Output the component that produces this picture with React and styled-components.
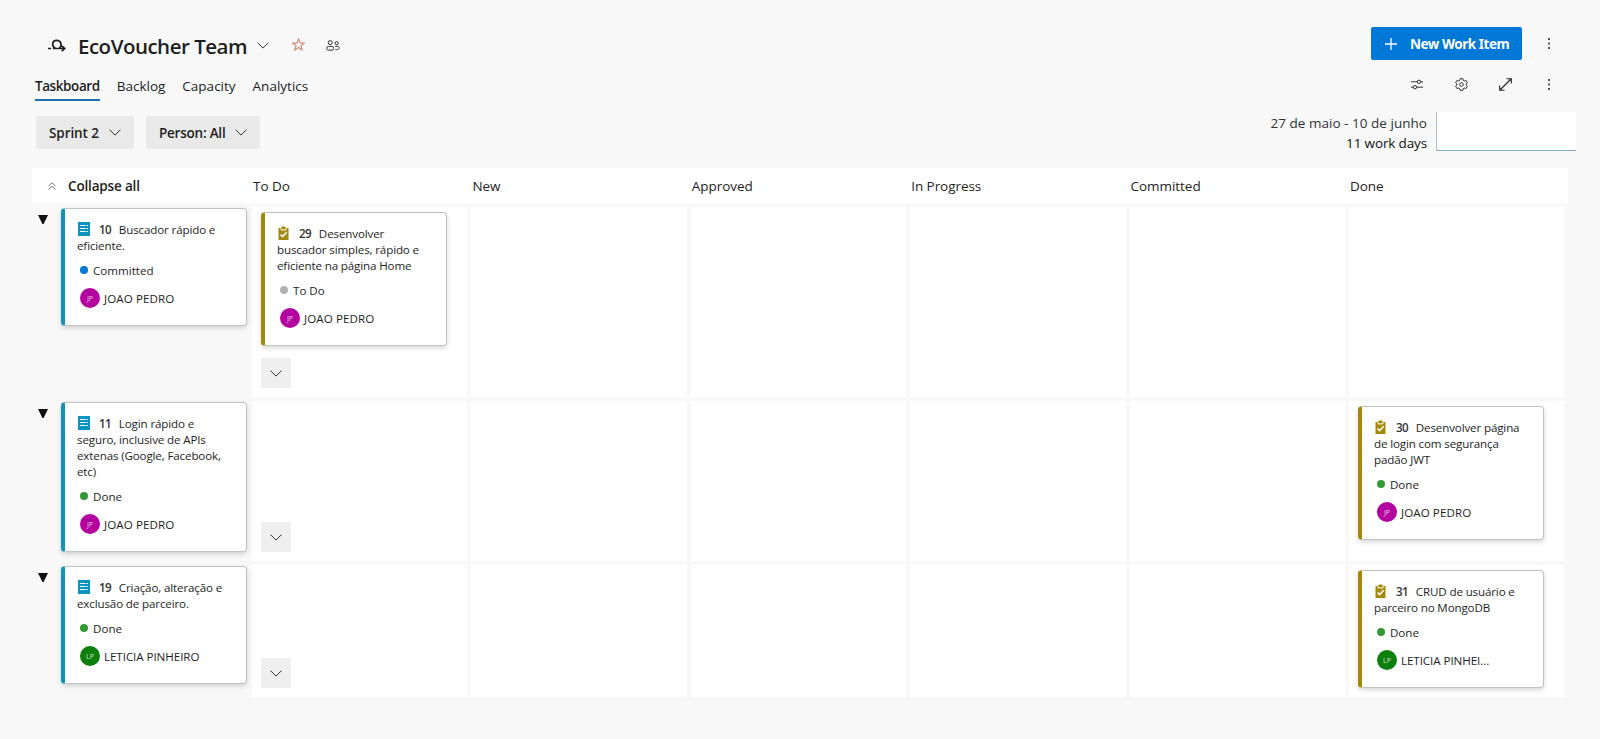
import React from 'react';
import styled, { createGlobalStyle } from 'styled-components';

const GlobalStyle = createGlobalStyle`
  *, *::before, *::after { box-sizing: border-box; }
  body {
    margin: 0;
    background: #f8f8f8;
    color: #1e1e1e;
    font-family: "Open Sans", "Noto Sans", sans-serif;
    font-size: 13.5px;
  }
  button { font: inherit; color: inherit; border: 0; padding: 0; background: none; }
`;

const Page = styled.div`
  height: 739px;
  padding: 27px 24px 0 32px;
  overflow: hidden;
`;

const TitleBar = styled.header`
  display: flex;
  align-items: center;
  height: 33px;
  padding: 0 0 0 16px;
`;

const Title = styled.h1`
  margin: 4px 10px 0 12px;
  font-size: 20.5px;
  font-weight: 550;
  line-height: 28px;
  letter-spacing: -0.5px;
  white-space: nowrap;
`;

const TitleIcon = styled.span`
  display: flex;
  margin: ${(p) => p.$top || 0}px ${(p) => p.$right || 0}px 0 0;
`;

const PrimaryButton = styled.button`
  display: flex;
  align-items: center;
  gap: 13px;
  width: 151px;
  height: 33px;
  margin-left: auto;
  padding: 0 0 0 14px;
  border-radius: 2px;
  background: #0078d7;
  color: #fff;
  font-family: "Noto Sans", sans-serif;
  font-weight: 700;
  letter-spacing: -0.46px;
  white-space: nowrap;
`;

const IconButton = styled.button`
  display: flex;
  align-items: center;
  justify-content: center;
  width: ${(p) => p.$width || 16}px;
  height: 16px;
`;

const NavBar = styled.nav`
  display: flex;
  align-items: flex-start;
  height: 52px;
  padding: 14px 20px 0 3px;
`;

const Tab = styled.a`
  height: 27px;
  margin-right: 17px;
  line-height: 25px;
  white-space: nowrap;
  font-weight: ${(p) => (p.$active ? 600 : 400)};
  letter-spacing: ${(p) => (p.$active ? '-0.42px' : '0')};
  border-bottom: 2px solid ${(p) => (p.$active ? '#1c6fb0' : 'transparent')};
`;

const ViewActions = styled.div`
  display: flex;
  gap: 28px;
  margin: 2px -1px 0 auto;
`;

const FilterBar = styled.div`
  display: flex;
  align-items: flex-start;
  height: 56px;
  padding-left: 4px;
`;

const FilterButton = styled.button`
  display: flex;
  align-items: center;
  gap: 10px;
  height: 33px;
  margin: 4px 12px 0 0;
  padding: 0 13px 0 13px;
  border-radius: 2px;
  background: #e9e9e9;
  font-weight: 600;
  letter-spacing: ${(p) => p.$spacing}px;
  white-space: nowrap;
`;

const SprintDates = styled.div`
  margin-left: auto;
  padding-top: 1px;
  color: #333;
  line-height: 20px;
  letter-spacing: 0.03px;
  text-align: right;
  white-space: nowrap;
`;

const WorkDays = styled.div`
  color: #111;
  letter-spacing: -0.14px;
`;

const Burndown = styled.div`
  width: 140px;
  height: 39px;
  margin-left: 9px;
  background: #fff;
  border-left: 1px solid #b4bcc6;
  border-bottom: 1px solid #86a9c9;
`;

const BoardHeader = styled.div`
  display: grid;
  grid-template-columns: 220px repeat(6, 219.4px);
  align-items: center;
  width: 1536px;
  height: 35px;
  padding-left: 1px;
  background: #fff;
  overflow: hidden;
`;

const CollapseAll = styled.button`
  display: flex;
  align-items: center;
  gap: 12px;
  padding: 1px 0 0 15px;
  font-weight: 600;
  letter-spacing: -0.17px;
`;

const ColumnName = styled.div`
  padding-top: 1px;
  letter-spacing: -0.05px;
`;

const Board = styled.div`
  display: flex;
  flex-direction: column;
  gap: 4px;
  padding-top: 4px;
`;

const BoardRow = styled.section`
  display: grid;
  grid-template-columns: 216px repeat(6, 215.4px);
  column-gap: 4px;
  height: ${(p) => p.$height}px;
`;

const RowHead = styled.div`
  display: flex;
  align-items: flex-start;
  padding: 1px 0 0 6px;
`;

const Toggle = styled.button`
  display: flex;
  width: 23px;
  padding-top: 7px;
`;

const Cell = styled.div`
  display: flex;
  flex-direction: column;
  justify-content: space-between;
  min-width: 0;
  padding: 5px 0 9px 9px;
  background: #fff;
`;

const ExpandButton = styled.button`
  display: flex;
  align-items: center;
  justify-content: center;
  width: 30px;
  height: 30px;
  margin-top: auto;
  background: #efeff0;
`;

const CardBox = styled.article`
  width: 186px;
  padding: 13px 12px 17px;
  border: 1px solid #c2c2c2;
  border-left: 4px solid ${(p) => p.$accent};
  border-radius: 4px;
  background: #fff;
  box-shadow: 0 2px 5px rgba(0, 0, 0, 0.16);
  font-size: 11.6px;
`;

const CardTitle = styled.div`
  line-height: 16px;
  letter-spacing: -0.14px;
  white-space: nowrap;
`;

const TitleLine = styled.div`
  display: flex;
  height: 16px;
`;

const TypeIcon = styled.span`
  display: flex;
  width: 22px;
  padding-left: 1px;
`;

const ItemId = styled.span`
  margin-right: 8px;
  font-weight: 550;
  letter-spacing: -0.7px;
  color: #333;
`;

const State = styled.div`
  display: flex;
  align-items: center;
  gap: 5px;
  height: 16px;
  margin: 8px 0 0 3px;
`;

const Dot = styled.span`
  width: 8px;
  height: 8px;
  border-radius: 50%;
  background: ${(p) => p.$color};
`;

const Assignee = styled.div`
  display: flex;
  align-items: center;
  gap: 4px;
  height: 20px;
  margin: 10px 0 0 3px;
`;

const Avatar = styled.span`
  display: flex;
  align-items: center;
  justify-content: center;
  width: 20px;
  height: 20px;
  border-radius: 50%;
  background: ${(p) => p.$color};
  color: rgba(255, 255, 255, 0.8);
  font-size: 7px;
`;

const PersonName = styled.span`
  letter-spacing: ${(p) => p.$spacing}px;
  white-space: nowrap;
`;

const Chevron = () => (
  <svg width="12" height="7" viewBox="0 0 12 7" fill="none" stroke="#333" strokeWidth="1">
    <path d="M.5.6 6 6.1 11.5.6" />
  </svg>
);

const SprintIcon = () => (
  <svg width="18" height="13" viewBox="0 0 18 13" fill="none" stroke="#1e1e1e" strokeWidth="1.7">
    <path d="M0 9.5H3.2M5 9.5H16.5M7.4 9.3C3.2 7.4 4 1.3 8.7 1.3S14.2 6.6 11.4 9.3M13.8 6.9 16.7 9.5 13.8 12.1" />
  </svg>
);

const StarIcon = () => (
  <svg width="13" height="13" viewBox="0 0 13 13" fill="none" stroke="#d28670" strokeWidth="1.1">
    <path d="M6.5.9 8 4.9 12.3 5.1 8.9 7.7 10.1 12 6.5 9.5 2.9 12 4.1 7.7.7 5.1 5 4.9Z" />
  </svg>
);

const PeopleIcon = () => (
  <svg width="14" height="11" viewBox="0 0 14 11" fill="none" stroke="#333" strokeWidth="1">
    <circle cx="4.2" cy="2.6" r="2" />
    <circle cx="10.7" cy="3.2" r="1.6" />
    <rect x=".8" y="6.4" width="6.8" height="3.8" rx="1.7" />
    <path d="M9.2 6.4h2.4c1 0 1.5.5 1.5 1.3 0 1.3-1 2-2.4 2-.6 0-1-.1-1.4-.3" />
  </svg>
);

const PlusIcon = () => (
  <svg width="12" height="12" viewBox="0 0 12 12" stroke="#fff" strokeWidth="1.3">
    <path d="M6 0V12M0 6H12" />
  </svg>
);

const MoreIcon = () => (
  <svg width="2" height="11" viewBox="0 0 2 11" fill="#555">
    <rect width="2" height="2" />
    <rect y="4.5" width="2" height="2" />
    <rect y="9" width="2" height="2" />
  </svg>
);

const SlidersIcon = () => (
  <svg width="12" height="11" viewBox="0 0 12 11" fill="none" stroke="#333" strokeWidth="1">
    <path d="M0 2.8H6.2M9.8 2.8H12M0 8.2H2.2M5.8 8.2H12" />
    <circle cx="8" cy="2.8" r="1.7" />
    <circle cx="4" cy="8.2" r="1.7" />
  </svg>
);

const GearIcon = () => (
  <svg width="13" height="13" viewBox="0 0 13 13" fill="none" stroke="#333" strokeWidth="1" strokeLinejoin="round">
    <circle cx="6.5" cy="6.5" r="1.8" />
    <path d="M5.1.7h2.8l.4 1.7 1.1.6 1.6-.6 1.4 2.4-1.2 1.1v1.2l1.2 1.1-1.4 2.4-1.6-.6-1.1.6-.4 1.7H5.1l-.4-1.7-1.1-.6-1.6.6L.6 8.2l1.2-1.1V5.9L.6 4.8 2 2.4l1.6.6 1.1-.6Z" />
  </svg>
);

const ExpandIcon = () => (
  <svg width="13" height="13" viewBox="0 0 13 13" fill="none" stroke="#222" strokeWidth="1.1">
    <path d="M1 12 12 1M7.5.7h4.8v4.8M.7 7.5v4.8h4.8" />
  </svg>
);

const CollapseIcon = () => (
  <svg width="8" height="8" viewBox="0 0 8 8" fill="none" stroke="#777" strokeWidth="1">
    <path d="M.5 4 4 .8 7.5 4M.5 7.5 4 4.3 7.5 7.5" />
  </svg>
);

const TriangleIcon = () => (
  <svg width="10" height="9" viewBox="0 0 10 9" fill="#111">
    <path d="M0 0H10L5.6 9H4.4Z" />
  </svg>
);

const BacklogItemIcon = () => (
  <svg width="12" height="14" viewBox="0 0 12 14">
    <rect width="12" height="14" fill="#0b94c0" />
    <path d="M2 3.5H7.6M8.4 3.5H10M2 6.5H7.6M8.4 6.5H10M2 9.5H7.6M8.4 9.5H10" stroke="#fff" strokeWidth="1" />
  </svg>
);

const TaskIcon = () => (
  <svg width="11" height="14" viewBox="0 0 11 14">
    <path d="M.5 2H3L4 0.4H7L8 2H10.5V14H.5Z" fill="#a4880a" />
    <path d="M3 2.2V3.9H8V2.2" fill="none" stroke="#fff" strokeWidth="1" />
    <path d="M2.6 8.6 4.6 10.6 8.7 6.2" fill="none" stroke="#fff" strokeWidth="1.5" />
  </svg>
);

const STATE_COLORS = { Committed: '#0078d4', 'To Do': '#b2b2b2', Done: '#339933' };

const JOAO = { initials: 'JP', name: 'JOAO PEDRO', color: '#b4009e', spacing: 0.08 };
const LETICIA = { initials: 'LP', name: 'LETICIA PINHEIRO', color: '#0b800b', spacing: -0.06 };

const COLUMNS = ['To Do', 'New', 'Approved', 'In Progress', 'Committed', 'Done'];

const ROWS = [
  {
    height: 190,
    item: { id: 10, lines: ['Buscador rápido e', 'eficiente.'], state: 'Committed', person: JOAO },
    tasks: {
      'To Do': {
        id: 29,
        lines: ['Desenvolver', 'buscador simples, rápido e', 'eficiente na página Home'],
        state: 'To Do',
        person: JOAO,
      },
    },
  },
  {
    height: 160,
    item: {
      id: 11,
      lines: ['Login rápido e', 'seguro, inclusive de APIs', 'extenas (Google, Facebook,', 'etc)'],
      state: 'Done',
      person: JOAO,
    },
    tasks: {
      Done: {
        id: 30,
        lines: ['Desenvolver página', 'de login com segurança', 'padão JWT'],
        state: 'Done',
        person: JOAO,
      },
    },
  },
  {
    height: 132,
    item: { id: 19, lines: ['Criação, alteração e', 'exclusão de parceiro.'], state: 'Done', person: LETICIA },
    tasks: {
      Done: {
        id: 31,
        lines: ['CRUD de usuário e', 'parceiro no MongoDB'],
        state: 'Done',
        person: { ...LETICIA, name: 'LETICIA PINHEI...' },
      },
    },
  },
];

function Card({ id, lines, state, person, task }) {
  const [first, ...rest] = lines;
  return (
    <CardBox $accent={task ? '#a4880a' : '#0b94c0'}>
      <CardTitle>
        <TitleLine>
          <TypeIcon>{task ? <TaskIcon /> : <BacklogItemIcon />}</TypeIcon>
          <ItemId>{id}</ItemId>
          {first}
        </TitleLine>
        {rest.map((line) => (
          <TitleLine key={line}>{line}</TitleLine>
        ))}
      </CardTitle>
      <State>
        <Dot $color={STATE_COLORS[state]} />
        {state}
      </State>
      <Assignee>
        <Avatar $color={person.color}>{person.initials}</Avatar>
        <PersonName $spacing={person.spacing}>{person.name}</PersonName>
      </Assignee>
    </CardBox>
  );
}

export default function App() {
  return (
    <Page>
      <GlobalStyle />
      <TitleBar>
        <TitleIcon $top={4}><SprintIcon /></TitleIcon>
        <Title>EcoVoucher Team</Title>
        <TitleIcon $top={3} $right={23}><Chevron /></TitleIcon>
        <TitleIcon $top={2} $right={21}><StarIcon /></TitleIcon>
        <TitleIcon $top={3}><PeopleIcon /></TitleIcon>
        <PrimaryButton><PlusIcon />New Work Item</PrimaryButton>
        <IconButton $width={54}><MoreIcon /></IconButton>
      </TitleBar>
      <NavBar>
        <Tab $active>Taskboard</Tab>
        <Tab>Backlog</Tab>
        <Tab>Capacity</Tab>
        <Tab>Analytics</Tab>
        <ViewActions>
          <IconButton><SlidersIcon /></IconButton>
          <IconButton><GearIcon /></IconButton>
          <IconButton><ExpandIcon /></IconButton>
          <IconButton><MoreIcon /></IconButton>
        </ViewActions>
      </NavBar>
      <FilterBar>
        <FilterButton $spacing={-0.08}>Sprint 2<Chevron /></FilterButton>
        <FilterButton $spacing={-0.22}>Person: All<Chevron /></FilterButton>
        <SprintDates>
          27 de maio - 10 de junho
          <WorkDays>11 work days</WorkDays>
        </SprintDates>
        <Burndown />
      </FilterBar>
      <BoardHeader>
        <CollapseAll><CollapseIcon />Collapse all</CollapseAll>
        {COLUMNS.map((name) => <ColumnName key={name}>{name}</ColumnName>)}
      </BoardHeader>
      <Board>
        {ROWS.map((row) => (
          <BoardRow key={row.item.id} $height={row.height}>
            <RowHead>
              <Toggle><TriangleIcon /></Toggle>
              <Card {...row.item} />
            </RowHead>
            {COLUMNS.map((name) => (
              <Cell key={name}>
                {row.tasks[name] && <Card task {...row.tasks[name]} />}
                {name === 'To Do' && <ExpandButton><Chevron /></ExpandButton>}
              </Cell>
            ))}
          </BoardRow>
        ))}
      </Board>
    </Page>
  );
}
